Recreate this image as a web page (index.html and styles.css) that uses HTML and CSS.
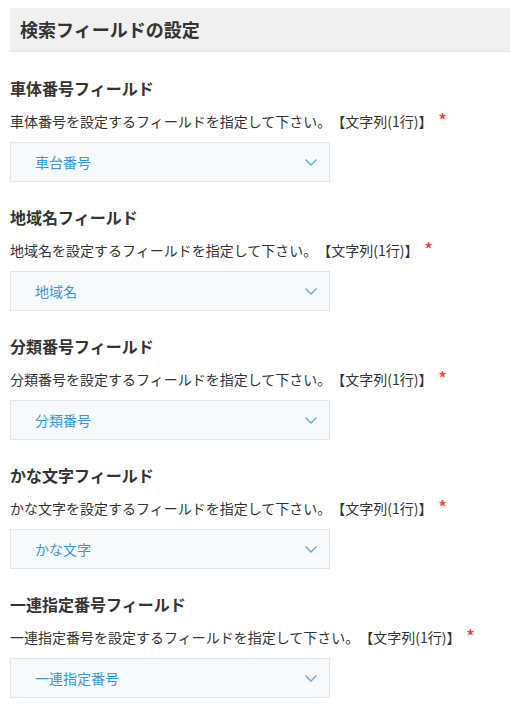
FILE: index.html
```html
<!DOCTYPE html>
<html lang="ja">
<head>
<meta charset="utf-8">
<title>検索フィールドの設定</title>
<link rel="stylesheet" href="styles.css">
</head>
<body>
<div class="page">
  <h1 class="header">検索フィールドの設定</h1>

  <section class="field">
    <h2 class="field-title">車体番号フィールド</h2>
    <p class="field-desc">車体番号を設定するフィールドを指定して下さい。【文字列(1行)】<span class="req">*</span></p>
    <div class="select"><span class="select-value">車台番号</span><svg class="chev" width="12" height="7" viewBox="0 0 12 7"><path d="M0.5 0.6 L6 6 L11.5 0.6" fill="none" stroke="#5dade2" stroke-width="1.4"/></svg></div>
  </section>

  <section class="field">
    <h2 class="field-title">地域名フィールド</h2>
    <p class="field-desc">地域名を設定するフィールドを指定して下さい。【文字列(1行)】<span class="req">*</span></p>
    <div class="select"><span class="select-value">地域名</span><svg class="chev" width="12" height="7" viewBox="0 0 12 7"><path d="M0.5 0.6 L6 6 L11.5 0.6" fill="none" stroke="#5dade2" stroke-width="1.4"/></svg></div>
  </section>

  <section class="field">
    <h2 class="field-title">分類番号フィールド</h2>
    <p class="field-desc">分類番号を設定するフィールドを指定して下さい。【文字列(1行)】<span class="req">*</span></p>
    <div class="select"><span class="select-value">分類番号</span><svg class="chev" width="12" height="7" viewBox="0 0 12 7"><path d="M0.5 0.6 L6 6 L11.5 0.6" fill="none" stroke="#5dade2" stroke-width="1.4"/></svg></div>
  </section>

  <section class="field">
    <h2 class="field-title">かな文字フィールド</h2>
    <p class="field-desc">かな文字を設定するフィールドを指定して下さい。【文字列(1行)】<span class="req">*</span></p>
    <div class="select"><span class="select-value">かな文字</span><svg class="chev" width="12" height="7" viewBox="0 0 12 7"><path d="M0.5 0.6 L6 6 L11.5 0.6" fill="none" stroke="#5dade2" stroke-width="1.4"/></svg></div>
  </section>

  <section class="field">
    <h2 class="field-title">一連指定番号フィールド</h2>
    <p class="field-desc">一連指定番号を設定するフィールドを指定して下さい。【文字列(1行)】<span class="req">*</span></p>
    <div class="select"><span class="select-value">一連指定番号</span><svg class="chev" width="12" height="7" viewBox="0 0 12 7"><path d="M0.5 0.6 L6 6 L11.5 0.6" fill="none" stroke="#5dade2" stroke-width="1.4"/></svg></div>
  </section>
</div>
</body>
</html>
```

FILE: styles.css
```css
html, body {
  margin: 0;
  padding: 0;
  background: #ffffff;
}

body {
  font-family: "Noto Sans CJK JP", "Noto Sans", sans-serif;
  color: #333333;
  text-spacing-trim: space-all;
}

.page {
  padding: 8px 0 0 10px;
}

.header {
  margin: 0;
  height: 43px;
  line-height: 43px;
  padding-left: 10px;
  background: #f0f0f0;
  border-bottom: 1px dotted #e2e2e2;
  font-size: 18px;
  font-weight: 700;
  color: #333333;
}

.field {
  padding-top: 24px;
}

.field + .field {
  padding-top: 23px;
}

.field-title {
  margin: 0;
  font-size: 16px;
  line-height: 24px;
  font-weight: 700;
  color: #333333;
}

.field-desc {
  margin: 11px 0 0;
  font-size: 14px;
  line-height: 20px;
  color: #333333;
  display: flex;
  align-items: center;
}

.req {
  color: #e74c3c;
  font-weight: 700;
  font-size: 16px;
  margin-left: 6px;
  position: relative;
  top: -2px;
}

.select {
  margin-top: 11px;
  box-sizing: border-box;
  width: 320px;
  height: 40px;
  border: 1px solid #e3e4e6;
  background: #f7f9fa;
  display: flex;
  align-items: center;
  justify-content: space-between;
  padding: 0 12px 0 24px;
}

.select-value {
  font-size: 14px;
  color: #3498db;
}

.chev {
  display: block;
}
```
